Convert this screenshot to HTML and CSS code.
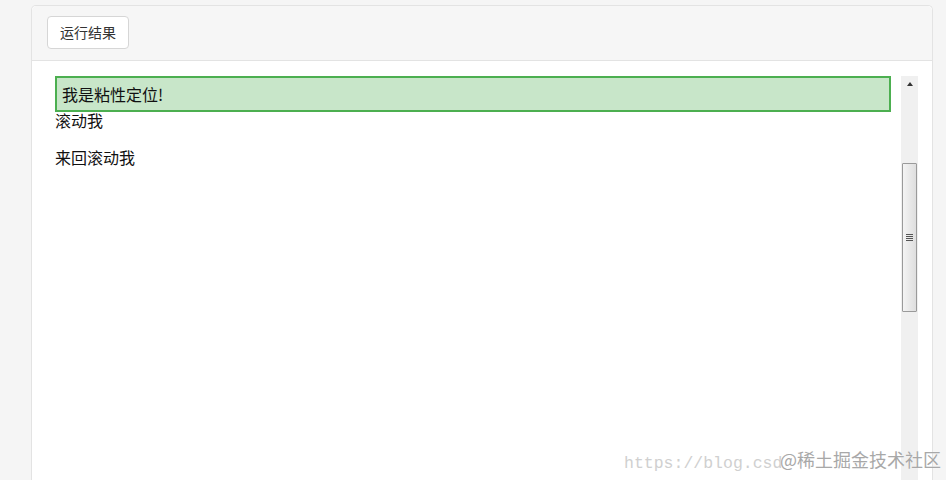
FILE: index.html
```html
<!DOCTYPE html>
<html lang="zh">
<head>
<meta charset="utf-8">
<link rel="stylesheet" href="styles.css">
</head>
<body>
<div class="panel">
  <div class="header">
    <button class="run-btn">运行结果</button>
  </div>
  <div class="result">
    <div class="frame">
      <div class="doc">
        <div class="sticky">我是粘性定位!</div>
        <p class="line first">滚动我</p>
        <p class="line">来回滚动我</p>
      </div>
      <div class="scrollbar">
        <div class="arrow"></div>
        <div class="thumb"><span class="grip"></span></div>
      </div>
    </div>
  </div>
</div>
<div class="watermark"><span class="url">https://blog.csd</span><span class="brand">@稀土掘金技术社区</span></div>
</body>
</html>
```
FILE: styles.css
```css
html, body {
  margin: 0;
  height: 100%;
}
body {
  background: #f5f5f5;
  padding: 5px 13px 0 31px;
  box-sizing: border-box;
  font-family: "Noto Sans CJK SC", "Liberation Sans", sans-serif;
  overflow: hidden;
  position: relative;
}
.panel {
  height: 100%;
  border: 1px solid #e3e3e3;
  border-bottom: none;
  border-radius: 5px 5px 0 0;
  background: #fff;
  display: flex;
  flex-direction: column;
}
.header {
  height: 55px;
  background: #f6f6f6;
  border-bottom: 1px solid #e3e3e3;
  border-radius: 5px 5px 0 0;
  padding: 10px 15px 0 15px;
  box-sizing: border-box;
  flex: none;
}
.run-btn {
  width: 82px;
  height: 33px;
  border: 1px solid #d6d6d6;
  border-radius: 4px;
  background: #fff;
  font-family: "Noto Sans CJK SC", sans-serif;
  font-size: 14px;
  color: #333;
  padding: 0;
  line-height: 31px;
}
.result {
  flex: 1;
  padding: 15px 14px 0 15px;
  display: flex;
}
.frame {
  flex: 1;
  display: flex;
}
.doc {
  flex: 1;
  padding: 0 10px 0 8px;
}
.sticky {
  height: 36px;
  box-sizing: border-box;
  border: 2px solid #4caf50;
  background: #c8e6c9;
  font-size: 16px;
  line-height: 32px;
  padding-left: 5px;
  color: #111;
  position: relative;
  z-index: 1;
}
.line {
  margin: 16px 0;
  font-size: 16px;
  line-height: 21px;
  color: #111;
}
.line.first {
  margin-top: -2px;
}
.scrollbar {
  width: 17px;
  flex: none;
  background: #f0f0f0;
  display: flex;
  flex-direction: column;
  align-items: center;
}
.arrow {
  margin-top: 6px;
  width: 0;
  height: 0;
  border-left: 3px solid transparent;
  border-right: 3px solid transparent;
  border-bottom: 4px solid #333;
}
.thumb {
  margin-top: 77px;
  width: 13px;
  height: 147px;
  border: 1px solid #9a9a9a;
  border-radius: 1px;
  background: linear-gradient(to right, #f4f4f4, #dedede);
  display: flex;
  align-items: center;
  justify-content: center;
}
.grip {
  width: 7px;
  height: 7px;
  background: repeating-linear-gradient(to bottom, #555 0 1px, transparent 1px 2px);
}
.watermark {
  position: absolute;
  left: 624px;
  top: 449px;
  white-space: nowrap;
}
.url {
  font-family: "Liberation Mono", monospace;
  font-size: 16.5px;
  color: #d0d0d0;
}
.brand {
  position: absolute;
  left: 156px;
  top: -3px;
  font-size: 18px;
  color: #a8a8a8;
  text-shadow: 0 0 1px #fff;
}
```
